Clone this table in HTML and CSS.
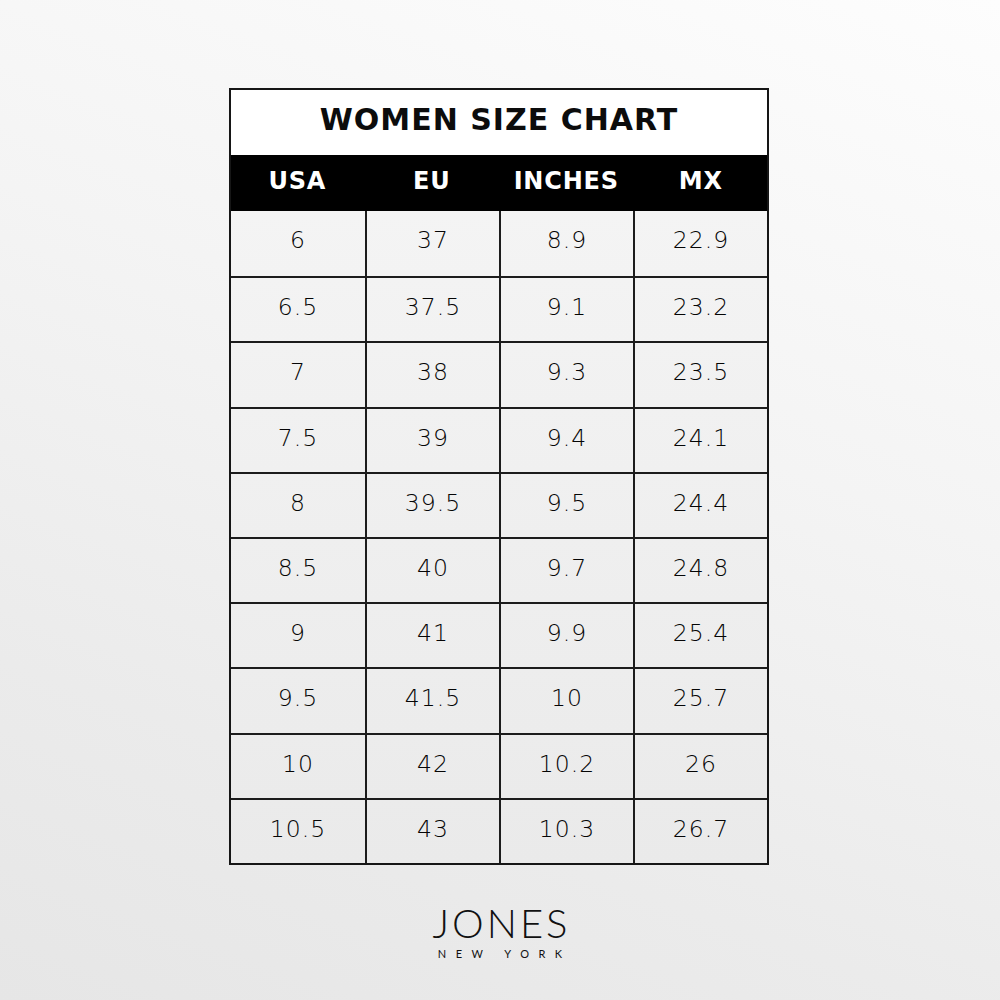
FILE: index.html
```html
<!DOCTYPE html>
<html lang="en">
<head>
<meta charset="utf-8">
<title>Women Size Chart</title>
<link rel="stylesheet" href="styles.css">
</head>
<body>
<main class="page">
  <section class="chart">
    <h1 class="title">WOMEN SIZE CHART</h1>
    <div class="head">
      <div class="hcell">USA</div>
      <div class="hcell">EU</div>
      <div class="hcell">INCHES</div>
      <div class="hcell">MX</div>
    </div>
    <div class="rows">
      <div class="cell">6</div><div class="cell">37</div><div class="cell">8.9</div><div class="cell">22.9</div>
      <div class="cell">6.5</div><div class="cell">37.5</div><div class="cell">9.1</div><div class="cell">23.2</div>
      <div class="cell">7</div><div class="cell">38</div><div class="cell">9.3</div><div class="cell">23.5</div>
      <div class="cell">7.5</div><div class="cell">39</div><div class="cell">9.4</div><div class="cell">24.1</div>
      <div class="cell">8</div><div class="cell">39.5</div><div class="cell">9.5</div><div class="cell">24.4</div>
      <div class="cell">8.5</div><div class="cell">40</div><div class="cell">9.7</div><div class="cell">24.8</div>
      <div class="cell">9</div><div class="cell">41</div><div class="cell">9.9</div><div class="cell">25.4</div>
      <div class="cell">9.5</div><div class="cell">41.5</div><div class="cell">10</div><div class="cell">25.7</div>
      <div class="cell">10</div><div class="cell">42</div><div class="cell">10.2</div><div class="cell">26</div>
      <div class="cell">10.5</div><div class="cell">43</div><div class="cell">10.3</div><div class="cell">26.7</div>
    </div>
  </section>
  <footer class="brand">
    <div class="brand-name">JONES</div>
    <div class="brand-sub">NEW YORK</div>
  </footer>
</main>
</body>
</html>
```

FILE: styles.css
```css
html, body {
  margin: 0;
  padding: 0;
}

body {
  background: linear-gradient(200deg, #fdfdfd 0%, #f4f4f4 40%, #ebebeb 75%, #e6e6e6 100%);
  min-height: 1000px;
}

.page {
  box-sizing: border-box;
  min-height: 1000px;
  padding-top: 88px;
  display: flex;
  flex-direction: column;
  align-items: center;
}

.chart {
  box-sizing: border-box;
  width: 540px;
  margin-left: -2px;
  border: 2px solid #161616;
}

.title {
  margin: 0;
  height: 65px;
  box-sizing: border-box;
  padding-bottom: 6px;
  background: #ffffff;
  display: flex;
  align-items: center;
  justify-content: center;
  font-family: "DejaVu Sans", sans-serif;
  font-weight: bold;
  font-size: 30px;
  letter-spacing: 1px;
  color: #0c0c0c;
}

.head {
  height: 56px;
  background: #000000;
  display: grid;
  grid-template-columns: repeat(4, 1fr);
  column-gap: 2px;
}

.hcell {
  display: flex;
  align-items: center;
  justify-content: center;
  padding-bottom: 4px;
  color: #ffffff;
  font-family: "DejaVu Sans", sans-serif;
  font-weight: bold;
  font-size: 24px;
  letter-spacing: 0.8px;
}

.rows {
  display: grid;
  grid-template-columns: repeat(4, 1fr);
  grid-auto-rows: 65.2px;
  background: linear-gradient(180deg, #f4f4f4 0%, #efefef 50%, #eaeaea 100%);
}

.cell {
  box-sizing: border-box;
  display: flex;
  align-items: center;
  justify-content: center;
  padding-bottom: 5px;
  border-top: 2px solid #1c1c1c;
  border-left: 2px solid #1c1c1c;
  font-family: "DejaVu Sans", sans-serif;
  font-weight: 200;
  font-size: 23.5px;
  letter-spacing: 1px;
  color: #050505;
}

.cell:nth-child(4n+1) {
  border-left: none;
}

.cell:nth-child(-n+4) {
  border-top: none;
  padding-bottom: 7px;
}

.brand {
  margin-top: 38px;
  display: flex;
  flex-direction: column;
  align-items: center;
  color: #111111;
}

.brand-name {
  font-family: "Lato", sans-serif;
  font-weight: 300;
  font-size: 40px;
  line-height: 1;
  letter-spacing: 3px;
  margin-right: -3px;
}

.brand-sub {
  margin-top: 5px;
  font-family: "Lato", sans-serif;
  font-weight: 400;
  font-size: 11px;
  line-height: 1;
  letter-spacing: 9.5px;
  margin-right: -9.5px;
}
```
